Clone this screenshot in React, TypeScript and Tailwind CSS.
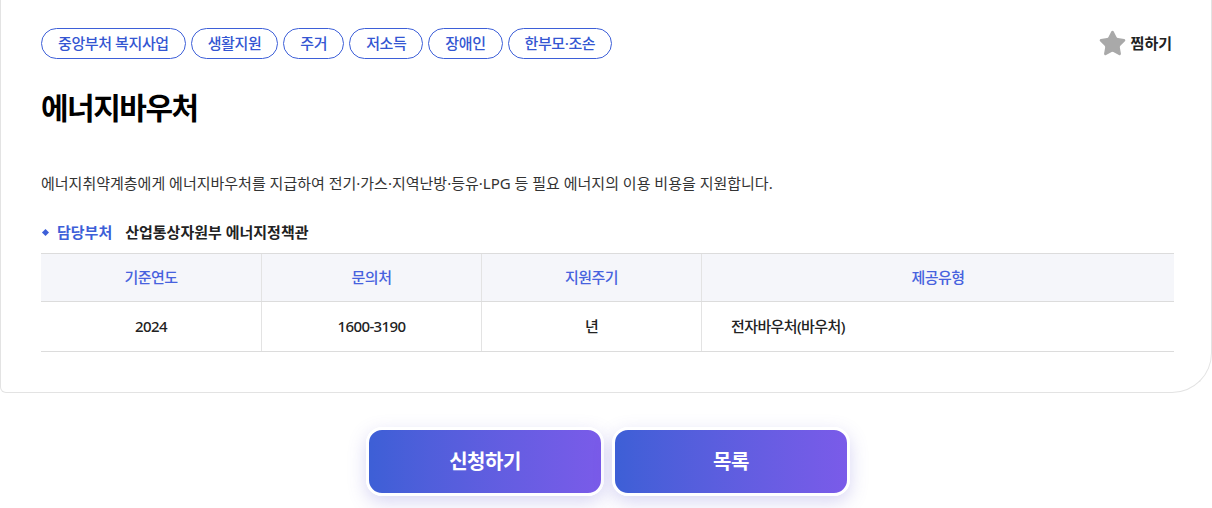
import React from "react";
import { Star } from "lucide-react";

const tags = ["중앙부처 복지사업", "생활지원", "주거", "저소득", "장애인", "한부모·조손"];

const columns = [
  { head: "기준연도", body: "2024", w: "w-[220px]", align: "text-center" },
  { head: "문의처", body: "1600-3190", w: "w-[220px]", align: "text-center" },
  { head: "지원주기", body: "년", w: "w-[220px]", align: "text-center" },
  { head: "제공유형", body: "전자바우처(바우처)", w: "flex-1", align: "text-left pl-[29px]" },
];

export default function App() {
  return (
    <div className="w-[1212px] h-[508px] overflow-hidden bg-white font-['Noto_Sans','Noto_Sans_CJK_KR',sans-serif] text-[#222]">
      <div className="border-x border-b border-[#e3e3e3] rounded-bl-[6px] rounded-br-[40px] pt-[28px] pl-[40px] pr-[37px] pb-[40px]">
        <div className="flex items-center justify-between">
          <div className="flex gap-[5px]">
            {tags.map((t) => (
              <span
                key={t}
                className="h-[31px] flex items-center px-[16px] rounded-full border border-[#3d5fd8] text-[#3456d2] text-[15px] font-medium tracking-[-0.4px]"
              >
                {t}
              </span>
            ))}
          </div>
          <div className="flex items-center gap-[4px] pr-[2px]">
            <Star size={29} fill="#a9a9a9" stroke="#a9a9a9" strokeWidth={1.2} />
            <span className="text-[15px] font-bold text-[#222]">찜하기</span>
          </div>
        </div>

        <h1 className="mt-[31px] text-[30px] leading-[36px] font-bold tracking-[-1.5px] text-black">에너지바우처</h1>

        <p className="mt-[46px] text-[15px] leading-[22px] text-[#333]">
          에너지취약계층에게 에너지바우처를 지급하여 전기·가스·지역난방·등유·LPG 등 필요 에너지의 이용 비용을 지원합니다.
        </p>

        <div className="mt-[27px] flex items-center h-[22px] text-[15px]">
          <span className="w-[5px] h-[5px] rotate-45 bg-[#3d5fd8] ml-[2px] mr-[9px]" />
          <span className="font-bold text-[#3d5fd8]">담당부처</span>
          <span className="ml-[13px] font-bold text-[#222]">산업통상자원부 에너지정책관</span>
        </div>

        <div className="mt-[10px] border-t border-b border-[#dcdcdc]">
          <div className="flex h-[48px] bg-[#f5f6fa] border-b border-[#dcdcdc]">
            {columns.map((c, i) => (
              <div
                key={c.head}
                className={`${c.w} flex items-center justify-center text-[15px] font-medium tracking-[-0.5px] text-[#4762de] ${i > 0 ? "border-l border-[#e3e3e3]" : ""}`}
              >
                {c.head}
              </div>
            ))}
          </div>
          <div className="flex h-[49px]">
            {columns.map((c, i) => (
              <div
                key={c.head}
                className={`${c.w} ${c.align} leading-[49px] text-[15px] font-medium tracking-[-0.6px] text-[#222] ${i > 0 ? "border-l border-[#e3e3e3]" : ""}`}
              >
                {c.body}
              </div>
            ))}
          </div>
        </div>
      </div>

      <div className="mt-[34px] flex justify-center gap-[8px] pl-[4px]">
        {["신청하기", "목록"].map((b) => (
          <button
            key={b}
            className="w-[238px] h-[69px] rounded-[16px] border-[3px] border-white bg-gradient-to-r from-[#3d5fd6] to-[#7a5be9] text-white text-[20px] font-bold tracking-[-0.5px] shadow-[0_6px_18px_rgba(100,90,210,0.25)]"
          >
            {b}
          </button>
        ))}
      </div>
    </div>
  );
}
